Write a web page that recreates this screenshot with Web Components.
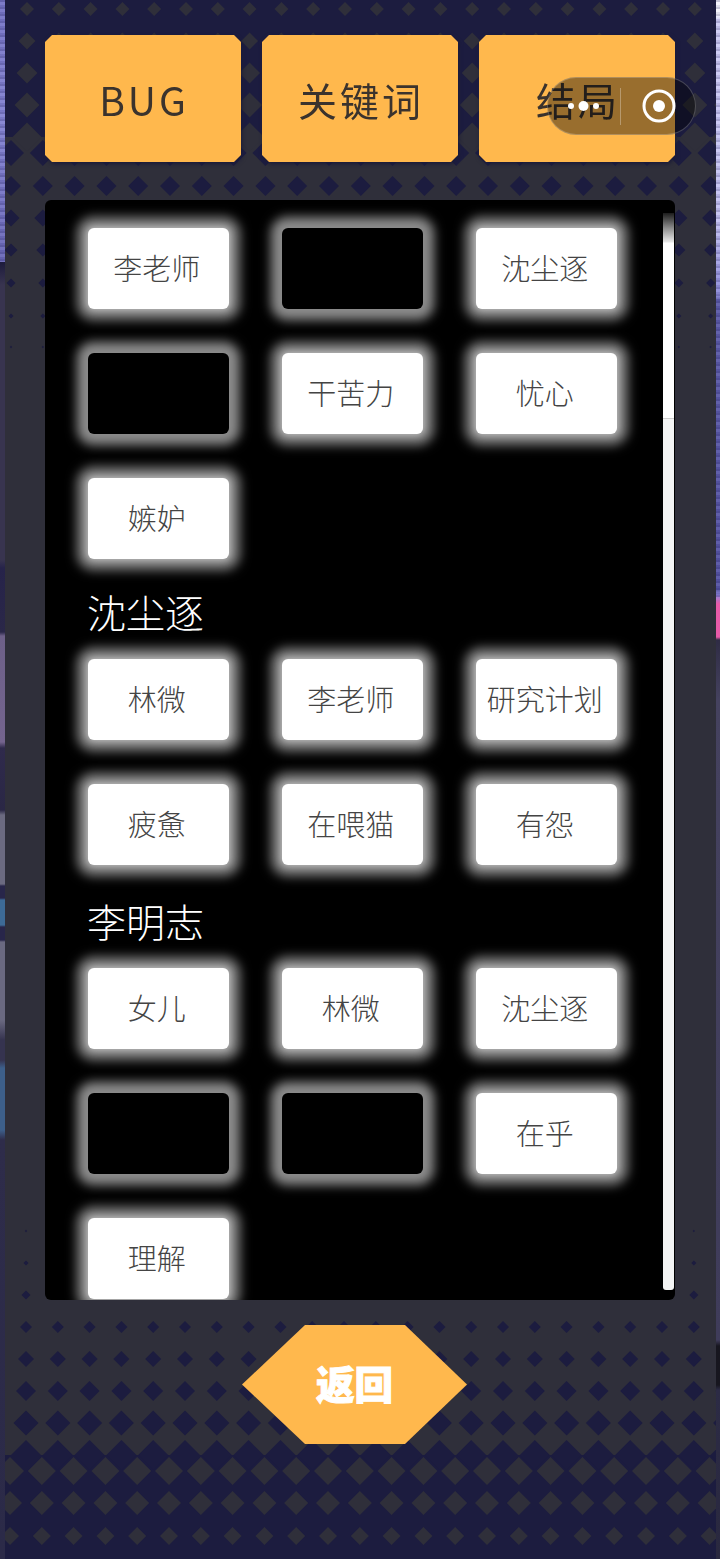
<!DOCTYPE html>
<html lang="zh">
<head>
<meta charset="utf-8">
<title>BUG</title>
<style>
    html, body {
        margin: 0;
        padding: 0;
        background: #2f2f3a;
    }
    body {
        width: 720px;
        height: 1559px;
        overflow: hidden;
        font-family: "Noto Sans CJK SC", "Noto Sans", sans-serif;
    }
</style>
</head>
<body>
<game-screen>
    <side-strip slot="left" side="left"></side-strip>
    <diamond-stage>
        <tab-bar>
            <tab-button>BUG</tab-button>
            <tab-button>关键词</tab-button>
            <tab-button>结局</tab-button>
        </tab-bar>
        <word-panel>
            <word-grid>
                <word-chip>李老师</word-chip>
                <word-chip blank></word-chip>
                <word-chip>沈尘逐</word-chip>
                <word-chip blank></word-chip>
                <word-chip>干苦力</word-chip>
                <word-chip>忧心</word-chip>
                <word-chip>嫉妒</word-chip>
            </word-grid>
            <group-title style="--title-height: 100px; --title-top: 24px">沈尘逐</group-title>
            <word-grid>
                <word-chip>林微</word-chip>
                <word-chip>李老师</word-chip>
                <word-chip>研究计划</word-chip>
                <word-chip>疲惫</word-chip>
                <word-chip>在喂猫</word-chip>
                <word-chip>有怨</word-chip>
            </word-grid>
            <group-title style="--title-height: 103px; --title-top: 27px">李明志</group-title>
            <word-grid>
                <word-chip>女儿</word-chip>
                <word-chip>林微</word-chip>
                <word-chip>沈尘逐</word-chip>
                <word-chip blank></word-chip>
                <word-chip blank></word-chip>
                <word-chip>在乎</word-chip>
                <word-chip>理解</word-chip>
            </word-grid>
        </word-panel>
        <back-button>返回</back-button>
    </diamond-stage>
    <side-strip slot="right" side="right"></side-strip>
    <wx-capsule></wx-capsule>
</game-screen>

<script>
class GameScreen extends HTMLElement {
    constructor() {
        super();
        this.attachShadow({mode: "open"}).innerHTML = `
        <style>
            :host { display: flex; position: relative; width: 720px; height: 1559px; overflow: hidden; }
            ::slotted(diamond-stage) { flex: 1; }
        </style>
        <slot name="left"></slot><slot></slot><slot name="right"></slot>`;
    }
}

// the photo behind the page shows only as a thin strip on each side
class SideStrip extends HTMLElement {
    constructor() {
        super();
        this.attachShadow({mode: "open"}).innerHTML = `
        <style>
            :host { display: block; height: 1559px; flex: none; position: relative; }
            :host([side="left"]) {
                width: 5px;
                background: linear-gradient(180deg,
                    #7573c4 0, #8483d2 120px, #6a68b8 262px,
                    #1d1b3c 262px, #38344f 285px, #38344f 560px,
                    #26234a 568px, #2a2748 632px,
                    #6d6088 636px, #74648e 742px,
                    #2f2a4c 748px, #2a2745 810px,
                    #6b6a80 815px, #6b6a80 884px,
                    #28264a 886px, #28264a 898px,
                    #3d6a96 900px, #3d6a96 925px,
                    #28264a 927px, #28264a 940px,
                    #6a6980 942px, #6a6980 1020px,
                    #35334f 1040px, #35334f 1060px,
                    #3d5f8a 1068px, #3d5f8a 1130px,
                    #2e2c4a 1140px, #2b2a48 1559px);
            }
            :host([side="right"]) {
                width: 4px;
                background: linear-gradient(180deg,
                    #f4f4fd 0, #f4f4fd 15px,
                    #cfcdf6 20px, #c4c2f2 220px, #8c8ad8 295px,
                    #5c5ba8 300px, #5654a4 590px,
                    #8a80d8 595px, #e85aa8 604px, #e85aa8 637px,
                    #2f2c45 640px, #45425f 700px, #3f3c5a 1340px,
                    #17161f 1346px, #17161f 1385px,
                    #2c2b45 1390px, #29283f 1559px);
            }
            .grain {
                position: absolute;
                inset: 0 0 auto 0;
                height: 600px;
                background: repeating-linear-gradient(180deg,
                    rgba(30,28,80,.22) 0 2px, rgba(255,255,255,.05) 2px 5px, rgba(30,28,80,.1) 5px 7px);
            }
            :host([side="left"]) .grain { height: 262px; }
        </style>
        <div class="grain"></div>`;
    }
}

// rows of diamonds that grow and shrink down the page: [y, half size, x start, colour]
const NAVY = "#1c1c3f";
const SLATE = "#2f2f3a";
const DIAMOND_ROWS = [
    [9, 7, 27, SLATE], [41, 8.5, 27, SLATE], [73, 10.5, 27, SLATE], [105, 12.5, 27, SLATE], [137, 14.5, 27, SLATE],
    [153, 13, 11, NAVY], [186, 10, 11, NAVY], [218, 8.5, 11, NAVY], [250, 6.5, 11, NAVY],
    [283, 4.5, 11, NAVY], [316, 2.5, 11, NAVY], [347, 1.2, 11, NAVY],
    [1231, 1.2, 26, NAVY], [1263, 2.5, 26, NAVY], [1295, 4.5, 26, NAVY],
    [1327, 6, 26, NAVY], [1359, 8, 26, NAVY], [1391, 10, 26, NAVY], [1423, 12.5, 26, NAVY], [1455, 15, 26, NAVY],
    [1471, 14, 10, SLATE], [1503, 12, 10, SLATE], [1536, 9, 10, SLATE]
];

class DiamondStage extends HTMLElement {
    constructor() {
        super();
        let shapes = "";
        DIAMOND_ROWS.forEach(([y, half, start, colour]) => {
            for (let x = start; x < 740; x += 31.8) {
                shapes += `<polygon fill="${colour}" points="${x},${y - half} ${x + half},${y} ${x},${y + half} ${x - half},${y}"/>`;
            }
        });
        this.attachShadow({mode: "open"}).innerHTML = `
        <style>
            :host {
                display: flex;
                flex-direction: column;
                position: relative;
                height: 1559px;
                box-sizing: border-box;
                overflow: hidden;
                padding: 35px 41px 0 40px;
                background: linear-gradient(180deg, ${NAVY} 0 137px, ${SLATE} 137px 1455px, ${NAVY} 1455px);
            }
            svg { position: absolute; left: -5px; top: 0; }
            .content { position: relative; display: flex; flex-direction: column; }
        </style>
        <svg width="720" height="1559" viewBox="0 0 720 1559">${shapes}</svg>
        <div class="content"><slot></slot></div>`;
    }
}

class TabBar extends HTMLElement {
    constructor() {
        super();
        this.attachShadow({mode: "open"}).innerHTML = `
        <style>
            :host { display: flex; gap: 21px; }
        </style>
        <slot></slot>`;
    }
}

class TabButton extends HTMLElement {
    constructor() {
        super();
        this.attachShadow({mode: "open"}).innerHTML = `
        <style>
            :host {
                display: block;
                width: 196px;
                height: 127px;
                filter: drop-shadow(1px 2px 2px #1a1a38);
            }
            .face {
                display: flex;
                align-items: center;
                justify-content: center;
                box-sizing: border-box;
                height: 100%;
                padding: 2px 0 0 2px;
                background: #ffb84d;
                color: #3b332d;
                font: 400 39px/1 "Noto Sans CJK SC", "Noto Sans", sans-serif;
                letter-spacing: 3px;
                clip-path: polygon(7px 0, calc(100% - 7px) 0, 100% 7px, 100% calc(100% - 7px),
                    calc(100% - 7px) 100%, 7px 100%, 0 calc(100% - 7px), 0 7px);
            }
        </style>
        <div class="face"><slot></slot></div>`;
    }
}

class WordPanel extends HTMLElement {
    constructor() {
        super();
        this.attachShadow({mode: "open"}).innerHTML = `
        <style>
            :host {
                display: flex;
                margin-top: 38px;
                width: 630px;
                height: 1100px;
                background: #000;
                border-radius: 6px;
                overflow: hidden;
            }
            .list { flex: 1; min-width: 0; padding: 28px 0 0 43px; box-sizing: border-box; }
            .bar {
                flex: none;
                width: 11px;
                margin: 13px 1px 10px 0;
                border-radius: 0 0 3px 3px;
                background: #f3f4f4;
                overflow: hidden;
            }
            .thumb {
                height: 205px;
                background: linear-gradient(180deg, #1c1c1c 0, #8c8c8c 15px, #e8e8e8 29px, #fff 30px);
                border-bottom: 1px solid #cfcfcf;
            }
        </style>
        <div class="list"><slot></slot></div>
        <div class="bar"><div class="thumb"></div></div>`;
    }
}

class WordGrid extends HTMLElement {
    constructor() {
        super();
        this.attachShadow({mode: "open"}).innerHTML = `
        <style>
            :host {
                display: grid;
                grid-template-columns: repeat(3, 140.5px);
                column-gap: 53.5px;
                row-gap: 44px;
            }
        </style>
        <slot></slot>`;
    }
}

class WordChip extends HTMLElement {
    constructor() {
        super();
        this.attachShadow({mode: "open"}).innerHTML = `
        <style>
            :host {
                display: flex;
                align-items: center;
                justify-content: center;
                box-sizing: border-box;
                height: 81px;
                padding: 0 3px 2px 0;
                background: #fff;
                color: #444;
                border-radius: 6px;
                font: 300 29px/1 "Noto Sans CJK SC", "Noto Sans", sans-serif;
                box-shadow: 0 0 7px 1px #c4c4c4, 0 0 11px 11px #808080;
            }
            :host([blank]) {
                background: #000;
                box-shadow: 0 0 11px 11px #8c8c8c;
            }
        </style>
        <slot></slot>`;
    }
}

class GroupTitle extends HTMLElement {
    constructor() {
        super();
        this.attachShadow({mode: "open"}).innerHTML = `
        <style>
            :host {
                display: block;
                height: var(--title-height);
                box-sizing: border-box;
                padding-top: var(--title-top);
                margin-left: -1px;
                color: #fff;
                font: 300 39px/56px "Noto Sans CJK SC", "Noto Sans", sans-serif;
            }
        </style>
        <slot></slot>`;
    }
}

class BackButton extends HTMLElement {
    constructor() {
        super();
        this.attachShadow({mode: "open"}).innerHTML = `
        <style>
            :host {
                display: flex;
                align-items: center;
                justify-content: center;
                box-sizing: border-box;
                width: 225px;
                height: 119px;
                margin: 25px 0 0 197px;
                padding-bottom: 4px;
                background: #ffb84d;
                color: #fff;
                font: 900 38.5px/1 "Noto Sans CJK SC", "Noto Sans", sans-serif;
                -webkit-text-stroke: 1px #fff;
                clip-path: polygon(0 50%, 63px 0, 163px 0, 100% 50%, 163px 100%, 63px 100%);
            }
        </style>
        <slot></slot>`;
    }
}

// the mini-program capsule sits over the page, above the third tab
class WxCapsule extends HTMLElement {
    constructor() {
        super();
        this.attachShadow({mode: "open"}).innerHTML = `
        <style>
            :host {
                position: absolute;
                left: 547px;
                top: 77px;
                width: 149px;
                height: 58px;
                box-sizing: border-box;
                display: flex;
                align-items: center;
                border-radius: 29px;
                background: rgba(0, 0, 0, .4);
                border: 1px solid rgba(255, 255, 255, .22);
            }
            .more { flex: none; width: 72px; height: 100%; display: block; }
            .line { flex: none; width: 1px; height: 37px; background: rgba(255, 255, 255, .3); }
            .target { flex: none; margin-left: 20px; display: block; }
        </style>
        <svg class="more" viewBox="0 0 72 56">
            <circle cx="23" cy="28" r="3" fill="#fff"/>
            <circle cx="35.5" cy="28" r="5" fill="#fff"/>
            <circle cx="48" cy="28" r="3" fill="#fff"/>
        </svg>
        <div class="line"></div>
        <svg class="target" width="36" height="36" viewBox="0 0 36 36">
            <circle cx="18" cy="18" r="15" fill="none" stroke="#fff" stroke-width="3"/>
            <circle cx="18" cy="18" r="6" fill="#fff"/>
        </svg>`;
    }
}

customElements.define("game-screen", GameScreen);
customElements.define("side-strip", SideStrip);
customElements.define("diamond-stage", DiamondStage);
customElements.define("tab-bar", TabBar);
customElements.define("tab-button", TabButton);
customElements.define("word-panel", WordPanel);
customElements.define("word-grid", WordGrid);
customElements.define("word-chip", WordChip);
customElements.define("group-title", GroupTitle);
customElements.define("back-button", BackButton);
customElements.define("wx-capsule", WxCapsule);
</script>
</body>
</html>
